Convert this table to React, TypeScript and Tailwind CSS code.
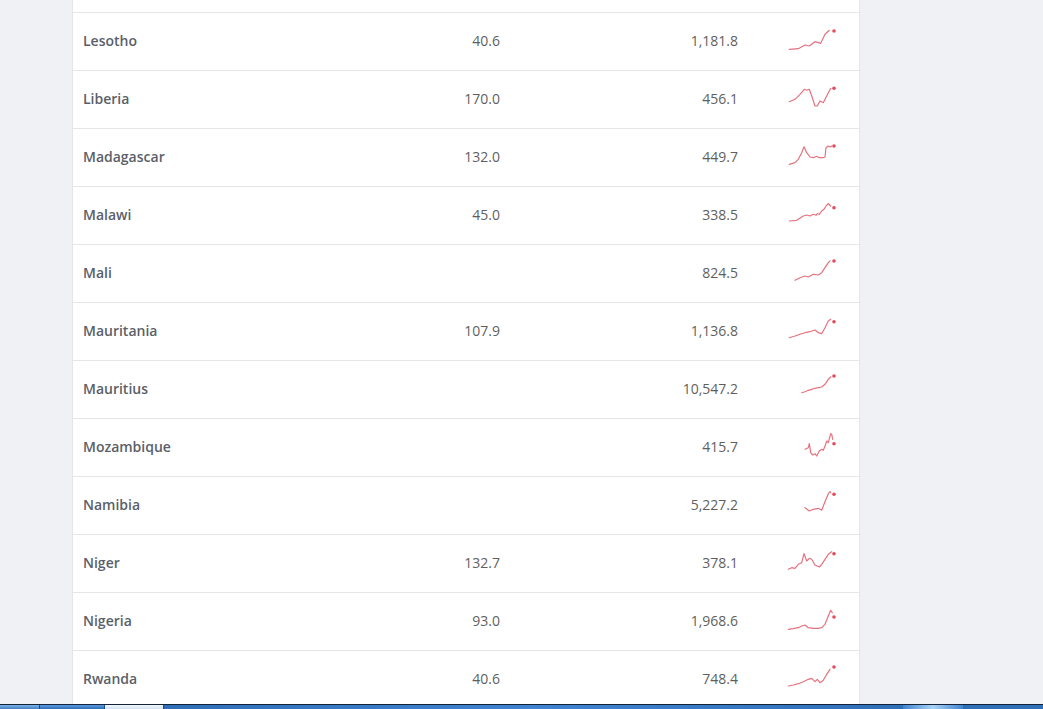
import React from "react";

interface Row {
  country: string;
  first: string;
  second: string;
  points: number[][];
  dot: number[];
}

const rows: Row[] = [
  {
    country: "Lesotho",
    first: "40.6",
    second: "1,181.8",
    points: [[3.3, 36.3], [12.3, 35.7], [19, 32], [23.3, 33], [29, 28.7], [34.7, 30.3], [39, 21.3], [43.3, 17.3]],
    dot: [48, 18],
  },
  {
    country: "Liberia",
    first: "170.0",
    second: "456.1",
    points: [[3.3, 30.7], [9, 28.3], [14, 23.3], [18.3, 18.3], [20.7, 19.3], [23.3, 18.3], [25.7, 25], [29, 35], [31.3, 35], [34, 30], [37.3, 31.7], [40.7, 25], [44.7, 17.3]],
    dot: [48, 17.3],
  },
  {
    country: "Madagascar",
    first: "132.0",
    second: "449.7",
    points: [[3.3, 35.3], [9, 33.7], [12.3, 30.3], [15.7, 23.7], [18, 17.7], [20.7, 23.7], [24, 28], [27.3, 28.7], [30.7, 27.3], [33.3, 28.7], [37.3, 28.7], [39, 28], [40, 18.7], [42.3, 17], [44, 18], [45.7, 17]],
    dot: [48, 17],
  },
  {
    country: "Malawi",
    first: "45.0",
    second: "338.5",
    points: [[3.3, 34], [10.7, 33.3], [17.3, 29], [20.7, 28], [24, 29], [27.3, 27.3], [30, 28.3], [31.3, 26.7], [33.3, 27.3], [35.7, 24], [38, 22.3], [40.7, 18], [42.3, 16.7], [44.7, 19]],
    dot: [48, 20.7],
  },
  {
    country: "Mali",
    first: "",
    second: "824.5",
    points: [[9, 35.3], [14, 32.7], [19, 31], [22.3, 32], [27.3, 29.3], [32.3, 30], [35.7, 27.7], [39, 22.7], [42.3, 17.7], [44, 16]],
    dot: [48, 16],
  },
  {
    country: "Mauritania",
    first: "107.9",
    second: "1,136.8",
    points: [[3.3, 34.7], [9, 33], [14, 31.3], [19, 29.7], [24, 28.7], [29, 27], [32.3, 29.7], [35.7, 30.7], [39, 24.7], [42.3, 18], [44.7, 16.3]],
    dot: [48, 18.7],
  },
  {
    country: "Mauritius",
    first: "",
    second: "10,547.2",
    points: [[15.7, 31.7], [19, 30.7], [22.3, 29.3], [25.7, 28.3], [29, 27.3], [32.3, 26.7], [35.7, 26], [39, 23.3], [42.3, 18.3], [44.7, 16]],
    dot: [48, 15],
  },
  {
    country: "Mozambique",
    first: "",
    second: "415.7",
    points: [[19, 30.3], [22.3, 28.7], [23.3, 24.7], [24.7, 33.7], [26.7, 36], [29, 34.7], [30.7, 37], [33.3, 32], [35.7, 30.3], [37.3, 31.3], [39, 27], [40.7, 22], [42.3, 23.7], [44.7, 14.7], [45.7, 15.3], [46.7, 20.3]],
    dot: [48, 24.7],
  },
  {
    country: "Namibia",
    first: "",
    second: "5,227.2",
    points: [[19, 30.7], [23.3, 34], [27.3, 32.3], [32.3, 31.3], [35.7, 33.3], [38, 27.3], [40, 22.3], [42.3, 16.7], [44, 14.7], [44.7, 15.7]],
    dot: [48, 17.3],
  },
  {
    country: "Niger",
    first: "132.7",
    second: "378.1",
    points: [[2.3, 34.3], [5.7, 32.7], [9, 33.3], [12.3, 29.3], [15.7, 27.7], [18, 18.7], [20.7, 26], [23.3, 23.3], [25.7, 24.3], [29, 30], [33.3, 32], [35.7, 29.3], [39, 24.3], [42.3, 19.3], [45.7, 16.7]],
    dot: [48, 18.7],
  },
  {
    country: "Nigeria",
    first: "93.0",
    second: "1,968.6",
    points: [[2.3, 36.3], [7.3, 35.7], [12.3, 34.7], [15.7, 33], [19, 32], [22.3, 34.7], [27.3, 35.3], [32.3, 35.3], [35.7, 34.7], [39, 31.3], [42.3, 23], [44.7, 17.3], [46.3, 19.7]],
    dot: [48, 24],
  },
  {
    country: "Rwanda",
    first: "40.6",
    second: "748.4",
    points: [[2.3, 35], [7.3, 34], [12.3, 32.7], [17.3, 30.7], [22.3, 28.3], [25.7, 27.3], [29, 30.7], [31.3, 28.3], [34, 31.7], [37.3, 29.3], [40.7, 23.3], [44, 18.3]],
    dot: [48, 16],
  },
];

function Sparkline({ points, dot }: { points: number[][]; dot: number[] }) {
  return (
    <svg width="52" height="57" viewBox="0 0 52 57" className="block">
      <polyline
        points={points.map((p) => p.join(",")).join(" ")}
        fill="none"
        stroke="#e6727f"
        strokeWidth="1.2"
        strokeLinejoin="round"
        strokeLinecap="round"
      />
      <circle cx={dot[0]} cy={dot[1]} r="1.8" fill="#e14c5f" />
    </svg>
  );
}

export default function App() {
  return (
    <div
      className="h-[709px] w-[1043px] flex flex-col overflow-hidden bg-[#f0f1f5]"
      style={{ fontFamily: '"Open Sans", "Liberation Sans", sans-serif' }}
    >
      <div className="flex-1 overflow-hidden">
        <div className="ml-[72px] w-[788px] bg-white border-x border-[#e4e6ea]">
          {/* tail of the row above */}
          <div className="h-[13px] border-b border-[#e6e6e6]" />

          {rows.map((row) => (
            <div
              key={row.country}
              className="grid grid-cols-[300px_137px_238px_111px] h-[58px] border-b border-[#e6e6e6] items-center"
            >
              <div className="pl-[10px] pb-[2px] text-[14px] font-semibold text-[#5a5f69]">{row.country}</div>
              <div className="pr-[10px] pb-[2px] text-right text-[14px] text-[#5f5f5f]">{row.first}</div>
              <div className="pr-[10px] pb-[2px] text-right text-[14px] text-[#5f5f5f]">{row.second}</div>
              <div className="pl-[38px] h-[57px]">
                <Sparkline points={row.points} dot={row.dot} />
              </div>
            </div>
          ))}
        </div>
      </div>

      {/* OS taskbar peeking in at the bottom */}
      <div className="h-[5px] shrink-0 border-t border-[#13243a] flex bg-gradient-to-r from-[#3b7cc4] via-[#4d90d6] to-[#2f6cb3]">
        <div className="w-[40px] bg-gradient-to-b from-[#7fb3e6] to-[#3f80c8] border-r border-[#1d4d85]" />
        <div className="w-[65px] bg-gradient-to-b from-[#5b9be0] to-[#2d6db8] border-r border-[#1d4d85]" />
        <div className="w-[59px] bg-gradient-to-b from-[#f4f9fe] to-[#cfe3f5] border-r border-[#1d4d85]" />
        <div className="flex-1 bg-gradient-to-r from-[#2f6fb8] via-[#3f84cf] to-[#2f6fb8]" />
        <div className="w-[60px] bg-gradient-to-r from-[#3f84cf] via-[#a9d2f5] to-[#3f84cf]" />
        <div className="w-[80px] bg-[#2f6fb8]" />
      </div>
    </div>
  );
}
